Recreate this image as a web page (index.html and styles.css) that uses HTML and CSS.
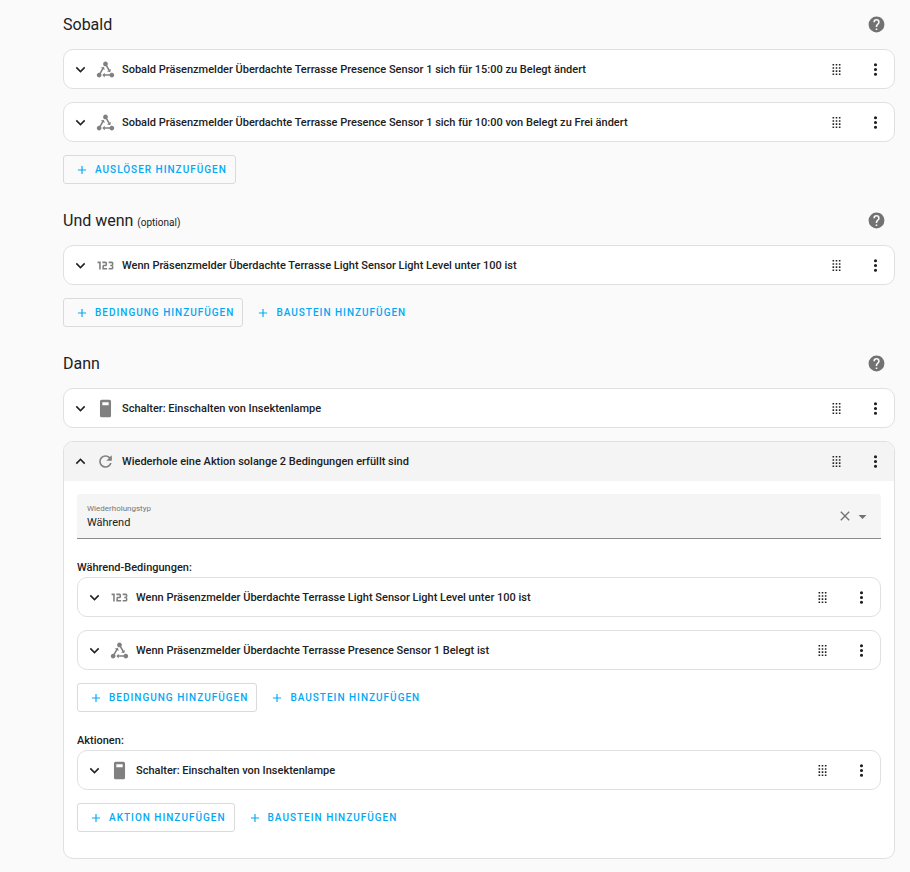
FILE: index.html
```html
<!DOCTYPE html>
<html lang="de">
<head>
    <meta charset="utf-8">
    <title>Automatisierung bearbeiten</title>
    <link rel="stylesheet" href="styles.css">
</head>
<body>
    <!-- icon set -->
    <svg class="sprite" aria-hidden="true">
        <symbol id="down" viewBox="0 0 24 24"><path d="M7.41,8.58L12,13.17L16.59,8.58L18,10L12,16L6,10L7.41,8.58Z"/></symbol>
        <symbol id="up" viewBox="0 0 24 24"><path d="M7.41,15.41L12,10.83L16.59,15.41L18,14L12,8L6,14L7.41,15.41Z"/></symbol>
        <symbol id="state" viewBox="0 0 24 24"><path d="M6.27 17.05A2.991 2.991 0 0 1 4 22C2.35 22 1 20.65 1 19S2.35 16 4 16C4.18 16 4.36 16 4.53 16.05L7.61 10.69L5.88 9.69L9.96 8.6L11.05 12.69L9.35 11.7L6.27 17.05M20 16C18.7 16 17.6 16.84 17.18 18H11V16L8 19L11 22V20H17.18C17.6 21.16 18.7 22 20 22C21.65 22 23 20.65 23 19S21.65 16 20 16M12 8C12.18 8 12.36 8 12.53 7.95L15.6 13.31L13.87 14.31L17.96 15.4L19.05 11.31L17.35 12.3L14.27 6.95C14.72 6.42 15 5.75 15 5C15 3.35 13.65 2 12 2S9 3.35 9 5 10.35 8 12 8Z"/></symbol>
        <symbol id="numeric" viewBox="0 0 24 24"><path d="M4,17V9H2V7H6V17H4M22,15C22,16.11 21.1,17 20,17H16V15H20V13H18V11H20V9H16V7H20A2,2 0 0,1 22,9V10.5A1.5,1.5 0 0,1 20.5,12A1.5,1.5 0 0,1 22,13.5V15M14,15V17H8V13C8,11.89 8.9,11 10,11H12V9H8V7H12A2,2 0 0,1 14,9V11C14,12.11 13.1,13 12,13H10V15H14Z"/></symbol>
        <symbol id="switch" viewBox="0 0 24 24"><path fill-rule="evenodd" d="M7,1H17A2,2 0 0,1 19,3V21A2,2 0 0,1 17,23H7A2,2 0 0,1 5,21V3A2,2 0 0,1 7,1M8,4V8H16V4Z"/></symbol>
        <symbol id="refresh" viewBox="0 0 24 24"><path d="M17.65,6.35C16.2,4.9 14.21,4 12,4A8,8 0 0,0 4,12A8,8 0 0,0 12,20C15.73,20 18.84,17.45 19.73,14H17.65C16.83,16.33 14.61,18 12,18A6,6 0 0,1 6,12A6,6 0 0,1 12,6C13.66,6 15.14,6.69 16.22,7.78L13,11H20V4L17.65,6.35Z"/></symbol>
        <symbol id="drag" viewBox="0 0 24 24"><path d="M7,19V17H9V19H7M11,19V17H13V19H11M15,19V17H17V19H15M7,15V13H9V15H7M11,15V13H13V15H11M15,15V13H17V15H15M7,11V9H9V11H7M11,11V9H13V11H11M15,11V9H17V11H15M7,7V5H9V7H7M11,7V5H13V7H11M15,7V5H17V7H15Z"/></symbol>
        <symbol id="dots" viewBox="0 0 24 24"><path d="M12,16A2,2 0 0,1 14,18A2,2 0 0,1 12,20A2,2 0 0,1 10,18A2,2 0 0,1 12,16M12,10A2,2 0 0,1 14,12A2,2 0 0,1 12,14A2,2 0 0,1 10,12A2,2 0 0,1 12,10M12,4A2,2 0 0,1 14,6A2,2 0 0,1 12,8A2,2 0 0,1 10,6A2,2 0 0,1 12,4Z"/></symbol>
        <symbol id="help" viewBox="0 0 24 24"><path d="M15.07,11.25L14.17,12.17C13.45,12.89 13,13.5 13,15H11V14.5C11,13.39 11.45,12.39 12.17,11.67L13.41,10.41C13.78,10.05 14,9.55 14,9C14,7.89 13.1,7 12,7A2,2 0 0,0 10,9H8A4,4 0 0,1 12,5A4,4 0 0,1 16,9C16,9.88 15.64,10.67 15.07,11.25M13,19H11V17H13M12,2A10,10 0 0,0 2,12A10,10 0 0,0 12,22A10,10 0 0,0 22,12C22,6.47 17.5,2 12,2Z"/></symbol>
        <symbol id="plus" viewBox="0 0 24 24"><path d="M19,13H13V19H11V13H5V11H11V5H13V11H19V13Z"/></symbol>
        <symbol id="close" viewBox="0 0 24 24"><path d="M19,6.41L17.59,5L12,10.59L6.41,5L5,6.41L10.59,12L5,17.59L6.41,19L12,13.41L17.59,19L19,17.59L13.41,12L19,6.41Z"/></symbol>
        <symbol id="menu-down" viewBox="0 0 24 24"><path d="M7,10L12,15L17,10H7Z"/></symbol>
    </svg>

    <main class="editor">
        <section class="section">
            <div class="heading">
                <h2>Sobald</h2>
                <button class="help" aria-label="Hilfe"><svg class="icon"><use href="#help"/></svg></button>
            </div>
            <div class="card row">
                <button class="toggle" aria-label="Aufklappen"><svg class="icon"><use href="#down"/></svg></button>
                <svg class="icon type"><use href="#state"/></svg>
                <h3>Sobald Präsenzmelder Überdachte Terrasse Presence Sensor 1 sich für 15:00 zu Belegt ändert</h3>
                <button class="handle" aria-label="Verschieben"><svg class="icon"><use href="#drag"/></svg></button>
                <button class="more" aria-label="Menü"><svg class="icon"><use href="#dots"/></svg></button>
            </div>
            <div class="card row">
                <button class="toggle" aria-label="Aufklappen"><svg class="icon"><use href="#down"/></svg></button>
                <svg class="icon type"><use href="#state"/></svg>
                <h3>Sobald Präsenzmelder Überdachte Terrasse Presence Sensor 1 sich für 10:00 von Belegt zu Frei ändert</h3>
                <button class="handle" aria-label="Verschieben"><svg class="icon"><use href="#drag"/></svg></button>
                <button class="more" aria-label="Menü"><svg class="icon"><use href="#dots"/></svg></button>
            </div>
            <div class="buttons">
                <button class="btn outlined"><svg><use href="#plus"/></svg>Auslöser hinzufügen</button>
            </div>
        </section>

        <section class="section">
            <div class="heading">
                <h2>Und wenn <small>(optional)</small></h2>
                <button class="help" aria-label="Hilfe"><svg class="icon"><use href="#help"/></svg></button>
            </div>
            <div class="card row">
                <button class="toggle" aria-label="Aufklappen"><svg class="icon"><use href="#down"/></svg></button>
                <svg class="icon type"><use href="#numeric"/></svg>
                <h3>Wenn Präsenzmelder Überdachte Terrasse Light Sensor Light Level unter 100 ist</h3>
                <button class="handle" aria-label="Verschieben"><svg class="icon"><use href="#drag"/></svg></button>
                <button class="more" aria-label="Menü"><svg class="icon"><use href="#dots"/></svg></button>
            </div>
            <div class="buttons">
                <button class="btn outlined"><svg><use href="#plus"/></svg>Bedingung hinzufügen</button>
                <button class="btn"><svg><use href="#plus"/></svg>Baustein hinzufügen</button>
            </div>
        </section>

        <section class="section">
            <div class="heading">
                <h2>Dann</h2>
                <button class="help" aria-label="Hilfe"><svg class="icon"><use href="#help"/></svg></button>
            </div>
            <div class="card row">
                <button class="toggle" aria-label="Aufklappen"><svg class="icon"><use href="#down"/></svg></button>
                <svg class="icon type"><use href="#switch"/></svg>
                <h3>Schalter: Einschalten von Insektenlampe</h3>
                <button class="handle" aria-label="Verschieben"><svg class="icon"><use href="#drag"/></svg></button>
                <button class="more" aria-label="Menü"><svg class="icon"><use href="#dots"/></svg></button>
            </div>
            <div class="card">
                <div class="row open">
                    <button class="toggle" aria-label="Zuklappen"><svg class="icon"><use href="#up"/></svg></button>
                    <svg class="icon type"><use href="#refresh"/></svg>
                    <h3>Wiederhole eine Aktion solange 2 Bedingungen erfüllt sind</h3>
                    <button class="handle" aria-label="Verschieben"><svg class="icon"><use href="#drag"/></svg></button>
                    <button class="more" aria-label="Menü"><svg class="icon"><use href="#dots"/></svg></button>
                </div>
                <div class="content">
                    <div class="field">
                        <div class="field-text">
                            <label for="repeat">Wiederholungstyp</label>
                            <select id="repeat">
                                <option>Anzahl</option>
                                <option selected>Während</option>
                                <option>Bis</option>
                            </select>
                        </div>
                        <button class="clear" aria-label="Löschen"><svg class="small"><use href="#close"/></svg></button>
                        <svg class="icon arrow"><use href="#menu-down"/></svg>
                    </div>

                    <h4>Während-Bedingungen:</h4>
                    <div class="card row">
                        <button class="toggle" aria-label="Aufklappen"><svg class="icon"><use href="#down"/></svg></button>
                        <svg class="icon type"><use href="#numeric"/></svg>
                        <h3>Wenn Präsenzmelder Überdachte Terrasse Light Sensor Light Level unter 100 ist</h3>
                        <button class="handle" aria-label="Verschieben"><svg class="icon"><use href="#drag"/></svg></button>
                        <button class="more" aria-label="Menü"><svg class="icon"><use href="#dots"/></svg></button>
                    </div>
                    <div class="card row">
                        <button class="toggle" aria-label="Aufklappen"><svg class="icon"><use href="#down"/></svg></button>
                        <svg class="icon type"><use href="#state"/></svg>
                        <h3>Wenn Präsenzmelder Überdachte Terrasse Presence Sensor 1 Belegt ist</h3>
                        <button class="handle" aria-label="Verschieben"><svg class="icon"><use href="#drag"/></svg></button>
                        <button class="more" aria-label="Menü"><svg class="icon"><use href="#dots"/></svg></button>
                    </div>
                    <div class="buttons">
                        <button class="btn outlined"><svg><use href="#plus"/></svg>Bedingung hinzufügen</button>
                        <button class="btn"><svg><use href="#plus"/></svg>Baustein hinzufügen</button>
                    </div>

                    <h4>Aktionen:</h4>
                    <div class="card row">
                        <button class="toggle" aria-label="Aufklappen"><svg class="icon"><use href="#down"/></svg></button>
                        <svg class="icon type"><use href="#switch"/></svg>
                        <h3>Schalter: Einschalten von Insektenlampe</h3>
                        <button class="handle" aria-label="Verschieben"><svg class="icon"><use href="#drag"/></svg></button>
                        <button class="more" aria-label="Menü"><svg class="icon"><use href="#dots"/></svg></button>
                    </div>
                    <div class="buttons">
                        <button class="btn outlined"><svg><use href="#plus"/></svg>Aktion hinzufügen</button>
                        <button class="btn"><svg><use href="#plus"/></svg>Baustein hinzufügen</button>
                    </div>
                </div>
            </div>
        </section>
    </main>
</body>
</html>
```
FILE: styles.css
```css
*{
    box-sizing: border-box;
}
body{
    margin: 0;
    background: #fafafa;
    color: #212121;
    font-family: Roboto, "Liberation Sans", sans-serif;
    font-size: 11px;
}
button{
    display: flex;
    align-items: center;
    padding: 0;
    border: 0;
    background: none;
    color: inherit;
    font-family: inherit;
    cursor: pointer;
}
svg{
    fill: currentColor;
    flex: none;
}
h2, h3, h4{
    margin: 0;
}
.sprite{
    display: none;
}
.editor{
    padding: 8px 15px 13px 63px;
}
.section{
    margin-bottom: 20px;
}
.section:last-child{
    margin-bottom: 0;
}
.icon{
    width: 19px;
    height: 19px;
}
.heading{
    display: flex;
    align-items: center;
    justify-content: space-between;
    height: 32px;
    padding-right: 9px;
    margin-bottom: 9px;
}
.heading h2{
    font-size: 16px;
    font-weight: 400;
}
.heading small{
    font-size: 10px;
}
.help{
    color: #727272;
}
.card{
    background: #fff;
    border: 1px solid #e0e0e0;
    border-radius: 10px;
    margin-bottom: 13px;
    overflow: hidden;
}
.row{
    display: flex;
    align-items: center;
    height: 40px;
    padding: 0 9px 0 7px;
}
.open{
    height: 39px;
    background: #f4f4f4;
}
.row h3{
    flex: 1;
    font-size: 11px;
    font-weight: 500;
}
.type{
    margin: 0 7px 0 6px;
    color: #808080;
}
.handle{
    margin-right: 20px;
}
.buttons{
    display: flex;
    gap: 3px;
}
.btn{
    height: 29px;
    padding: 0 10px;
    border-radius: 3px;
    color: #03a9f4;
    font-size: 10px;
    font-weight: 500;
    letter-spacing: 1px;
    text-transform: uppercase;
}
.btn svg{
    width: 14px;
    height: 14px;
    margin-right: 6px;
}
.outlined{
    padding: 0 8px 0 11px;
    border: 1px solid #dadada;
}
.content{
    padding: 13px 13px 26px;
}
.field{
    display: flex;
    align-items: center;
    height: 45px;
    padding: 0 9px 0 10px;
    background: #f5f5f5;
    border-bottom: 1px solid #8a8a8a;
    border-radius: 3px 3px 0 0;
}
.field-text{
    display: flex;
    flex: 1;
    flex-direction: column;
}
.field label{
    color: #757575;
    font-size: 8px;
    line-height: 12px;
}
.field select{
    appearance: none;
    padding: 0;
    border: 0;
    background: none;
    color: #212121;
    font-family: inherit;
    font-size: 11px;
    line-height: 15px;
}
.clear{
    color: #727272;
}
.small{
    width: 16px;
    height: 16px;
}
.arrow{
    color: #727272;
}
.content h4{
    padding-top: 20px;
    font-size: 11px;
    font-weight: 500;
    line-height: 18px;
}
```
